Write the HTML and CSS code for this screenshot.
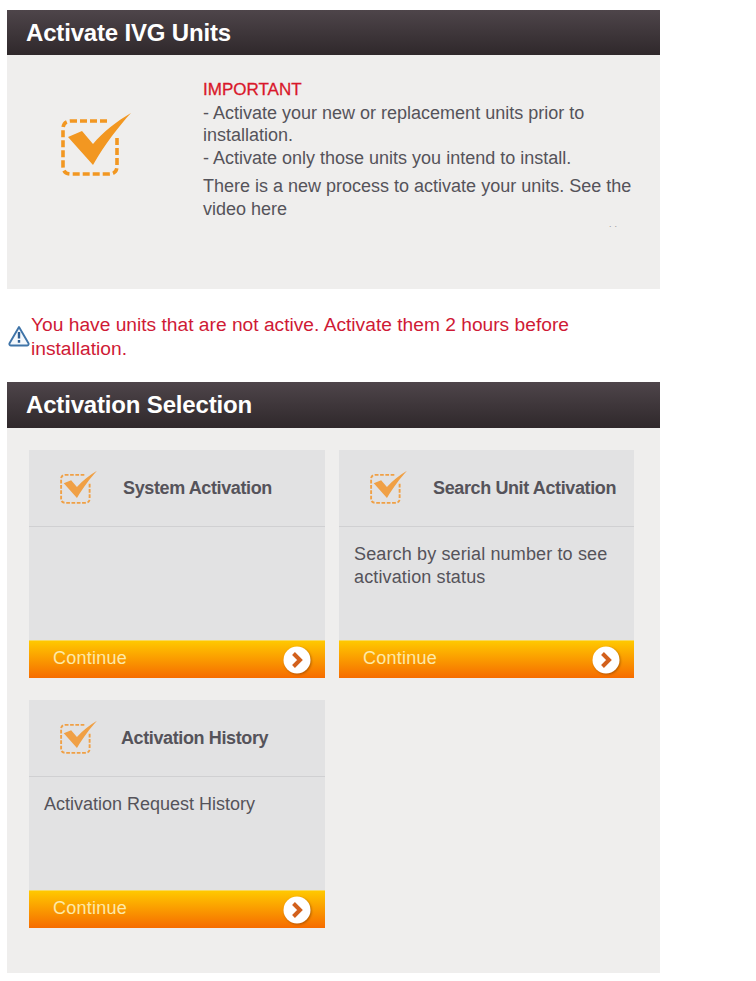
FILE: index.html
```html
<!DOCTYPE html>
<html lang="en">

<head>
    <meta charset="UTF-8">
    <title>Activate IVG Units</title>
    <link rel="stylesheet" href="styles.css">
</head>

<body>
    <svg class="defs" width="0" height="0">
        <symbol id="check-box" viewBox="0 0 72 64">
            <path d="M48 9 H12 Q4 9 4 17 V54 Q4 62 12 62 H50 Q58 62 58 54 V25" fill="none" stroke="currentColor" stroke-width="3.6" stroke-dasharray="7 3" />
            <path d="M9 25 L23 19 L34 32 C44 20 58 9 72 1 C60 14 46 32 34 53 Z" fill="currentColor" />
        </symbol>
        <symbol id="arrow" viewBox="0 0 30 30">
            <circle cx="15" cy="15" r="13.5" fill="#fff" />
            <path d="M11.5 8.5 L18 15 L11.5 21.5" fill="none" stroke="#d2601c" stroke-width="4" />
        </symbol>
    </svg>

    <section class="panel">
        <h2 class="panel-title">Activate IVG Units</h2>
        <div class="intro">
            <div class="intro-icon">
                <svg width="72" height="64"><use href="#check-box" /></svg>
            </div>
            <div class="intro-text">
                <strong>IMPORTANT</strong>
                <p>- Activate your new or replacement units prior to installation.<br>- Activate only those units you intend to install.</p>
                <p class="process">There is a new process to activate your units. See the video here</p>
                <div class="dots">..</div>
            </div>
        </div>
    </section>

    <div class="alert">
        <svg class="alert-icon" width="22" height="22" viewBox="0 0 22 22">
            <path d="M11 2 L20.6 18.5 Q20.8 20.5 19 20.5 L3 20.5 Q1.2 20.5 1.4 18.5 Z" fill="#f4f8fc" stroke="#3f74a8" stroke-width="1.9" stroke-linejoin="round" />
            <path d="M11 7 V13.5 M11 15 V17.8" stroke="#2f5f94" stroke-width="2.4" />
        </svg>
        <p>You have units that are not active. Activate them 2 hours before installation.</p>
    </div>

    <section class="panel">
        <h2 class="panel-title tall">Activation Selection</h2>
        <div class="cards">
            <div class="card">
                <div class="card-head">
                    <svg width="38" height="34"><use href="#check-box" /></svg>
                    <h3>System Activation</h3>
                </div>
                <div class="card-body"></div>
                <a class="continue"><span>Continue</span> <svg width="30" height="30"><use href="#arrow" /></svg></a>
            </div>
            <div class="card">
                <div class="card-head">
                    <svg width="38" height="34"><use href="#check-box" /></svg>
                    <h3>Search Unit Activation</h3>
                </div>
                <div class="card-body spaced">Search by serial number to see activation status</div>
                <a class="continue"><span>Continue</span> <svg width="30" height="30"><use href="#arrow" /></svg></a>
            </div>
            <div class="card">
                <div class="card-head history">
                    <svg width="38" height="34"><use href="#check-box" /></svg>
                    <h3>Activation History</h3>
                </div>
                <div class="card-body">Activation Request History</div>
                <a class="continue"><span>Continue</span> <svg width="30" height="30"><use href="#arrow" /></svg></a>
            </div>
        </div>
    </section>
</body>

</html>
```

FILE: styles.css
```css
* {
    box-sizing: border-box;
}

body {
    margin: 0;
    padding: 10px 0 0 7px;
    width: 660px;
    background: #fff;
    font-family: "Liberation Sans", Arial, sans-serif;
    color: #55535a;
}

.defs {
    display: block;
}

.panel {
    background: #efeeed;
}

.panel-title {
    margin: 0;
    height: 45px;
    padding-left: 19px;
    background: linear-gradient(#4e454a, #2f282b);
    color: #fff;
    font-size: 24px;
    line-height: 45px;
    font-weight: bold;
    letter-spacing: -0.17px;
}

.panel-title.tall {
    height: 46px;
    line-height: 46px;
}

.intro {
    display: flex;
    height: 234px;
}

.intro-icon {
    width: 196px;
    padding: 57px 0 0 52px;
    color: #f29721;
}

.intro-text {
    flex: 1;
    padding: 24px 22px 0 0;
    font-size: 18px;
    line-height: 22.5px;
}

.intro-text strong {
    display: block;
    color: #d9172a;
    font-size: 17px;
    font-weight: normal;
    -webkit-text-stroke: 0.3px #d9172a;
}

.intro-text p {
    margin: 0;
}

.intro-text .process {
    margin-top: 6px;
}

.dots {
    padding-right: 18px;
    font-size: 9px;
    line-height: 9px;
    letter-spacing: 3px;
    text-align: right;
    color: #999;
}

.alert {
    display: flex;
    height: 93px;
    padding-top: 24px;
    align-items: flex-start;
    color: #cf1a35;
    font-size: 19.2px;
    line-height: 24px;
}

.alert-icon {
    flex: none;
    margin: 12px 1px 0 1px;
}

.alert p {
    margin: 0;
    width: 560px;
}

.cards {
    display: grid;
    grid-template-columns: 296px 295px;
    column-gap: 14px;
    row-gap: 22px;
    padding: 22px 0 45px 22px;
}

.card {
    display: flex;
    flex-direction: column;
    height: 228px;
    background: #e2e2e3;
}

.card-head {
    display: flex;
    align-items: center;
    height: 77px;
    padding-left: 30px;
    border-bottom: 1px solid #d0d0d2;
    color: #f0a045;
}

.card-head svg {
    margin-bottom: 2px;
}

.card-head h3 {
    margin: 0 0 0 26px;
    color: #55535a;
    font-size: 18px;
    font-weight: bold;
    white-space: nowrap;
    letter-spacing: -0.38px;
}

.card-head.history h3 {
    margin-left: 24px;
}

.card-body {
    flex: 1;
    padding: 16px 15px 0 15px;
    font-size: 18px;
    line-height: 23px;
}

.card-body.spaced {
    letter-spacing: 0.14px;
}

.continue {
    display: flex;
    align-items: center;
    justify-content: space-between;
    height: 38px;
    padding: 0 13px 0 24px;
    border-top: 1px solid #f8d860;
    background: linear-gradient(#ffc800, #f66c00);
    color: #fde9a8;
    font-size: 18px;
    letter-spacing: 0.25px;
}

.continue span {
    margin-bottom: 3px;
}

.continue svg {
    filter: drop-shadow(1px 1px 1px rgba(110, 50, 0, 0.5));
}
```
